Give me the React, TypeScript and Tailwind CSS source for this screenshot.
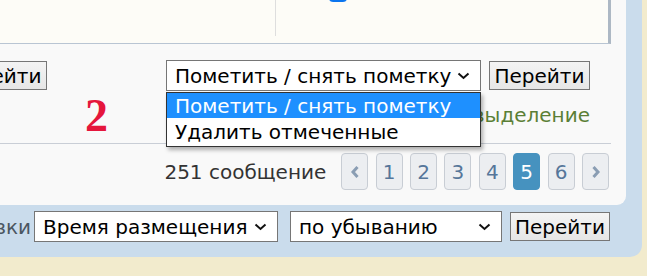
import React from "react";

const font = "font-['DejaVu_Sans',sans-serif]";

function Chevron() {
  return (
    <svg width="13" height="8" viewBox="0 0 13 8" className="shrink-0">
      <path d="M1.5 1.5 L6.5 6 L11.5 1.5" fill="none" stroke="#111" strokeWidth="2" />
    </svg>
  );
}

function FakeSelect({ label, width }: { label: string; width: string }) {
  return (
    <div
      className={`${width} h-[31px] flex items-center justify-between pl-[8px] pr-[10px] bg-white border border-[#767676] text-[20px] text-black leading-none`}
    >
      <span className="whitespace-nowrap">{label}</span>
      <Chevron />
    </div>
  );
}

function GoButton({ className = "" }: { className?: string }) {
  return (
    <div
      className={`w-[101px] h-[29px] shrink-0 flex items-center justify-center bg-gradient-to-b from-[#f4f4f4] to-[#e6e6e6] border border-[#767676] text-[20px] text-black leading-none ${className}`}
    >
      Перейти
    </div>
  );
}

function PageButton({ children, active = false }: { children: React.ReactNode; active?: boolean }) {
  return (
    <div
      className={`w-[27px] h-[37px] flex items-center justify-center rounded-[4px] border text-[20px] leading-none ${
        active
          ? "bg-[#4692bf] border-[#4692bf] text-white"
          : "bg-[#eceef1] border-[#c8cdd4] text-[#56769a]"
      }`}
    >
      {children}
    </div>
  );
}

function Arrow({ dir }: { dir: "left" | "right" }) {
  return (
    <svg width="10" height="14" viewBox="0 0 10 14">
      <path
        d={dir === "left" ? "M7.5 2 L3 7 L7.5 12" : "M2.5 2 L7 7 L2.5 12"}
        fill="none"
        stroke="#8a9db3"
        strokeWidth="3"
      />
    </svg>
  );
}

export default function App() {
  return (
    <div className={`w-[647px] h-[276px] overflow-hidden bg-[#f2ebcd] ${font}`}>
      {/* blue panel */}
      <div className="w-[642px] h-[257px] bg-[#cadcec] rounded-br-[12px] pr-[16px]">
        {/* inner light panel */}
        <div className="h-[205px] bg-[#f9f9f9] rounded-br-[9px] pr-[15px]">
          {/* cream box */}
          <div className="h-[44px] bg-[#fdfcf7] border-b border-r-[3px] border-b-[#b9c5d3] border-r-[#adb8c4] flex items-start">
            <div className="ml-[275px] w-px h-[36px] bg-[#dedede]" />
            <div className="ml-[53px] -mt-[16px] w-[18px] h-[18px] rounded-[4px] bg-[#0b75ef]" />
          </div>

          {/* row 1: actions */}
          <div className="relative mt-[16px] flex items-center">
            <GoButton className="-ml-[54px]" />
            <div className="ml-[119px]">
              <FakeSelect label="Пометить / снять пометку" width="w-[315px]" />
            </div>
            <GoButton className="ml-[8px]" />

            {/* open dropdown */}
            <div className="absolute left-[166px] top-[32px] z-10 w-[315px] bg-white border border-[#333] shadow-[2px_3px_4px_rgba(0,0,0,0.3)] text-[20px] leading-none">
              <div className="h-[25px] flex items-center pl-[8px] bg-[#1e90ff] text-white">Пометить / снять пометку</div>
              <div className="h-[28px] flex items-center pl-[8px] text-black">Удалить отмеченные</div>
            </div>
          </div>

          {/* row 2 */}
          <div className="h-[52px] flex items-start">
            <span className="ml-[85px] mt-[2px] font-['Liberation_Serif',serif] font-bold text-[46px] leading-[46px] text-[#e5163c]">
              2
            </span>
            <span className="ml-auto mr-[21px] mt-[14px] text-[20px] leading-none text-[#5b7f36] whitespace-nowrap">
              Отметить все • Снять выделение
            </span>
          </div>

          {/* divider */}
          <div className="h-px bg-[#c9ced6]" />

          {/* row 3: pagination */}
          <div className="mt-[9px] flex items-center justify-end pr-[2px]">
            <span className="mr-[15px] text-[20px] leading-none text-[#333]">251 сообщение</span>
            <div className="flex gap-[7.4px]">
              <PageButton>
                <Arrow dir="left" />
              </PageButton>
              <PageButton>1</PageButton>
              <PageButton>2</PageButton>
              <PageButton>3</PageButton>
              <PageButton>4</PageButton>
              <PageButton active>5</PageButton>
              <PageButton>6</PageButton>
              <PageButton>
                <Arrow dir="right" />
              </PageButton>
            </div>
          </div>
        </div>

        {/* sort row */}
        <div className="mt-[6px] flex items-center">
          <span className="ml-[-150px] w-[175px] text-right text-[20px] leading-none text-[#4b5661] whitespace-nowrap">
            Поле сортировки
          </span>
          <div className="ml-[9px]">
            <FakeSelect label="Время размещения" width="w-[244px]" />
          </div>
          <div className="ml-[12px]">
            <FakeSelect label="по убыванию" width="w-[212px]" />
          </div>
          <GoButton className="ml-[8px] !w-[100px]" />
        </div>
      </div>
    </div>
  );
}
